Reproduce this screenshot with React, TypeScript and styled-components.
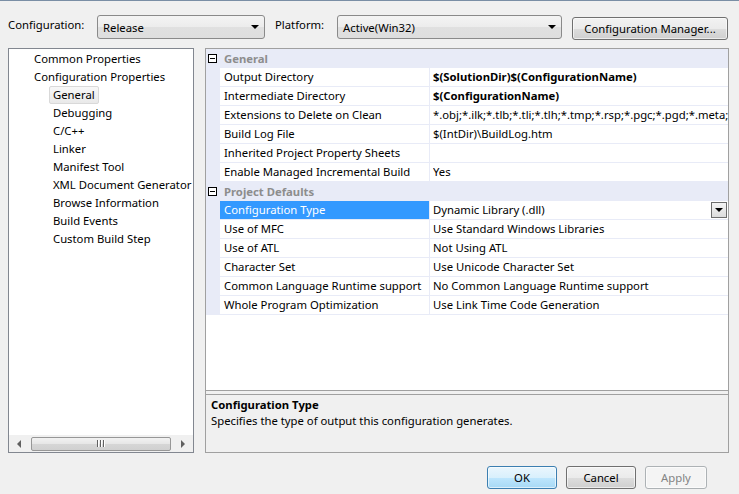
import React from 'react'
import styled, { createGlobalStyle } from 'styled-components'

const GlobalStyle = createGlobalStyle`
  html, body {
    margin: 0;
    padding: 0;
    background: #f0f0f0;
  }
  body {
    font-family: 'Noto Sans', 'Open Sans', sans-serif;
    font-size: 11.3px;
    color: #000;
  }
`

const Window = styled.div`
  width: 739px;
  height: 494px;
  background: #f0f0f0;
  border-top: 1px solid #7a8ea5;
  box-sizing: border-box;
  display: flex;
  flex-direction: column;
  overflow: hidden;
`
const Toolbar = styled.div`
  display: flex;
  align-items: center;
  height: 47px;
  padding: 0 11px 0 8px;
  box-sizing: border-box;
`
const Label = styled.span<{ $width: number }>`
  width: ${(p) => p.$width}px;
  flex: none;
  white-space: nowrap;
`
const Combo = styled.div<{ $width: number; $gap: number }>`
  width: ${(p) => p.$width}px;
  flex: none;
  height: 24px;
  margin-right: ${(p) => p.$gap}px;
  box-sizing: border-box;
  border: 1px solid #8a8a8a;
  border-radius: 3px;
  background: linear-gradient(#f4f4f4, #ececec 50%, #e0e0e0 51%, #dedede);
  display: flex;
  align-items: center;
  padding: 0 0 0 5px;
  margin-top: 5px;
`
const ComboText = styled.span`
  flex: 1;
`
const Arrow = styled.span`
  width: 0;
  height: 0;
  border-left: 4px solid transparent;
  border-right: 4px solid transparent;
  border-top: 4px solid #000;
  margin-right: 5px;
`
const Button = styled.button<{ $width: number; $default?: boolean }>`
  width: ${(p) => p.$width}px;
  height: 23px;
  box-sizing: border-box;
  font-family: inherit;
  font-size: 11.3px;
  color: ${(p) => (p.disabled ? '#838383' : '#000')};
  border: 1px solid ${(p) => (p.$default ? '#3c7fb1' : p.disabled ? '#adb2b5' : '#707070')};
  border-radius: 3px;
  padding: 0;
  background: ${(p) =>
    p.disabled
      ? '#f4f4f4'
      : p.$default
      ? 'linear-gradient(#eaf6fd, #d9f0fc 50%, #bee6fd 51%, #a7d9f5)'
      : 'linear-gradient(#f2f2f2, #ebebeb 50%, #dddddd 51%, #cfcfcf)'};
  box-shadow: inset 0 0 0 1px rgba(255, 255, 255, 0.6);
`
const TopButton = styled(Button)`
  margin-left: auto;
  margin-top: 8px;
`
const Main = styled.div`
  display: flex;
  gap: 11px;
  padding: 0 10px 0 8px;
  height: 405px;
`
const Tree = styled.div`
  width: 186px;
  flex: none;
  box-sizing: border-box;
  border: 1px solid #828790;
  background: #fff;
  display: flex;
  flex-direction: column;
`
const TreeList = styled.div`
  flex: 1;
  padding-top: 1px;
`
const TreeItem = styled.div<{ $level: number; $selected?: boolean }>`
  height: 18px;
  line-height: 18px;
  padding-left: ${(p) => (p.$level === 0 ? 25 : 44)}px;
  white-space: nowrap;
  span {
    display: inline-block;
    padding: 0 3px;
    margin-left: -4px;
    border: 1px solid ${(p) => (p.$selected ? '#d9d9d9' : 'transparent')};
    border-radius: 2px;
    line-height: 16px;
    background: ${(p) => (p.$selected ? 'linear-gradient(#f8f8f8, #e9e9e9)' : 'transparent')};
  }
`
const HScroll = styled.div`
  height: 17px;
  display: flex;
  align-items: center;
  background: #f0f0f0;
`
const ScrollArrow = styled.div<{ $dir: 'left' | 'right' }>`
  width: 20px;
  display: flex;
  justify-content: center;
  &::after {
    content: '';
    border-top: 4px solid transparent;
    border-bottom: 4px solid transparent;
    ${(p) => (p.$dir === 'left' ? 'border-right: 4px solid #606060;' : 'border-left: 4px solid #606060;')}
  }
`
const Thumb = styled.div`
  flex: 1;
  height: 14px;
  margin: 0 2px;
  box-sizing: border-box;
  border: 1px solid #979797;
  border-radius: 2px;
  background: linear-gradient(#f2f2f2, #e6e6e6 50%, #d6d6d6 51%, #d0d0d0);
  display: flex;
  align-items: center;
  justify-content: center;
  gap: 1px;
`
const Grip = styled.i`
  width: 1px;
  height: 7px;
  background: #606060;
  box-shadow: 1px 0 0 #fff;
  margin-right: 1px;
`
const Grid = styled.div`
  flex: 1;
  min-width: 0;
  box-sizing: border-box;
  border: 1px solid #a0a0a0;
  display: flex;
  flex-direction: column;
`
const Rows = styled.div`
  flex: 1;
  background: #fff;
  border-bottom: 1px solid #a0a0a0;
`
const Category = styled.div`
  height: 19px;
  display: flex;
  align-items: center;
  background: #e8ebf7;
  font-weight: bold;
  color: #8d8d8d;
  padding-left: 2px;
  box-sizing: border-box;
`
const Toggle = styled.span`
  width: 9px;
  height: 9px;
  box-sizing: border-box;
  border: 1px solid #000;
  background: #fff;
  margin-right: 7px;
  position: relative;
  &::after {
    content: '';
    position: absolute;
    left: 1px;
    top: 3px;
    width: 5px;
    height: 1px;
    background: #000;
  }
`
const Row = styled.div`
  display: flex;
  height: 19px;
  box-sizing: border-box;
  border-bottom: 1px solid #e8ebf7;
  border-left: 14px solid #e8ebf7;
`
const NameCell = styled.div<{ $selected?: boolean }>`
  width: 210px;
  flex: none;
  padding-left: 4px;
  box-sizing: border-box;
  line-height: 18px;
  white-space: nowrap;
  overflow: hidden;
  border-right: 1px solid #e8ebf7;
  background: ${(p) => (p.$selected ? '#3399ff' : '#fff')};
  color: ${(p) => (p.$selected ? '#fff' : '#000')};
`
const ValueCell = styled.div<{ $bold?: boolean }>`
  flex: 1;
  min-width: 0;
  padding-left: 3px;
  line-height: 18px;
  white-space: nowrap;
  overflow: hidden;
  font-weight: ${(p) => (p.$bold ? 'bold' : 'normal')};
  display: flex;
  align-items: center;
  span {
    flex: 1;
    overflow: hidden;
  }
`
const DropButton = styled.div`
  width: 16px;
  height: 16px;
  flex: none;
  box-sizing: border-box;
  border: 1px solid #6d6d6d;
  background: linear-gradient(#f4f4f4, #dcdcdc);
  margin-right: 1px;
  display: flex;
  align-items: center;
  justify-content: center;
  &::after {
    content: '';
    border-left: 4px solid transparent;
    border-right: 4px solid transparent;
    border-top: 4px solid #000;
  }
`
const Description = styled.div`
  height: 61px;
  border-top: 3px solid #f0f0f0;
  box-shadow: inset 0 1px 0 #a0a0a0;
  padding: 3px 5px 0;
  box-sizing: border-box;
  display: flex;
  flex-direction: column;
  gap: 1px;
`
const DescTitle = styled.div`
  font-weight: bold;
`
const Footer = styled.div`
  display: flex;
  justify-content: flex-end;
  gap: 9px;
  padding: 13px 32px 0 0;
`

type Prop = { name: string; value: string; bold?: boolean; selected?: boolean; combo?: boolean }

const general: Prop[] = [
  { name: 'Output Directory', value: '$(SolutionDir)$(ConfigurationName)', bold: true },
  { name: 'Intermediate Directory', value: '$(ConfigurationName)', bold: true },
  { name: 'Extensions to Delete on Clean', value: '*.obj;*.ilk;*.tlb;*.tli;*.tlh;*.tmp;*.rsp;*.pgc;*.pgd;*.meta;$(TargetPath)' },
  { name: 'Build Log File', value: '$(IntDir)\\BuildLog.htm' },
  { name: 'Inherited Project Property Sheets', value: '' },
  { name: 'Enable Managed Incremental Build', value: 'Yes' },
]
const defaults: Prop[] = [
  { name: 'Configuration Type', value: 'Dynamic Library (.dll)', selected: true, combo: true },
  { name: 'Use of MFC', value: 'Use Standard Windows Libraries' },
  { name: 'Use of ATL', value: 'Not Using ATL' },
  { name: 'Character Set', value: 'Use Unicode Character Set' },
  { name: 'Common Language Runtime support', value: 'No Common Language Runtime support' },
  { name: 'Whole Program Optimization', value: 'Use Link Time Code Generation' },
]

const treeItems = [
  { label: 'Common Properties', level: 0 },
  { label: 'Configuration Properties', level: 0 },
  { label: 'General', level: 1, selected: true },
  { label: 'Debugging', level: 1 },
  { label: 'C/C++', level: 1 },
  { label: 'Linker', level: 1 },
  { label: 'Manifest Tool', level: 1 },
  { label: 'XML Document Generator', level: 1 },
  { label: 'Browse Information', level: 1 },
  { label: 'Build Events', level: 1 },
  { label: 'Custom Build Step', level: 1 },
]

const PropRow = ({ p }: { p: Prop }) => (
  <Row>
    <NameCell $selected={p.selected}>{p.name}</NameCell>
    <ValueCell $bold={p.bold}>
      <span>{p.value}</span>
      {p.combo && <DropButton />}
    </ValueCell>
  </Row>
)

const App = () => {
  return (
    <Window>
      <GlobalStyle />
      <Toolbar>
        <Label $width={89}>Configuration:</Label>
        <Combo $width={168} $gap={10}>
          <ComboText>Release</ComboText>
          <Arrow />
        </Combo>
        <Label $width={62}>Platform:</Label>
        <Combo $width={225} $gap={0}>
          <ComboText>Active(Win32)</ComboText>
          <Arrow />
        </Combo>
        <TopButton $width={156}>Configuration Manager...</TopButton>
      </Toolbar>
      <Main>
        <Tree>
          <TreeList>
            {treeItems.map((t) => (
              <TreeItem key={t.label} $level={t.level} $selected={t.selected}>
                <span>{t.label}</span>
              </TreeItem>
            ))}
          </TreeList>
          <HScroll>
            <ScrollArrow $dir="left" />
            <Thumb>
              <Grip />
              <Grip />
              <Grip />
            </Thumb>
            <ScrollArrow $dir="right" />
          </HScroll>
        </Tree>
        <Grid>
          <Rows>
            <Category>
              <Toggle />
              General
            </Category>
            {general.map((p) => (
              <PropRow key={p.name} p={p} />
            ))}
            <Category>
              <Toggle />
              Project Defaults
            </Category>
            {defaults.map((p) => (
              <PropRow key={p.name} p={p} />
            ))}
          </Rows>
          <Description>
            <DescTitle>Configuration Type</DescTitle>
            <div>Specifies the type of output this configuration generates.</div>
          </Description>
        </Grid>
      </Main>
      <Footer>
        <Button $width={70} $default>
          OK
        </Button>
        <Button $width={70}>Cancel</Button>
        <Button $width={62} disabled>
          Apply
        </Button>
      </Footer>
    </Window>
  )
}

export default App
